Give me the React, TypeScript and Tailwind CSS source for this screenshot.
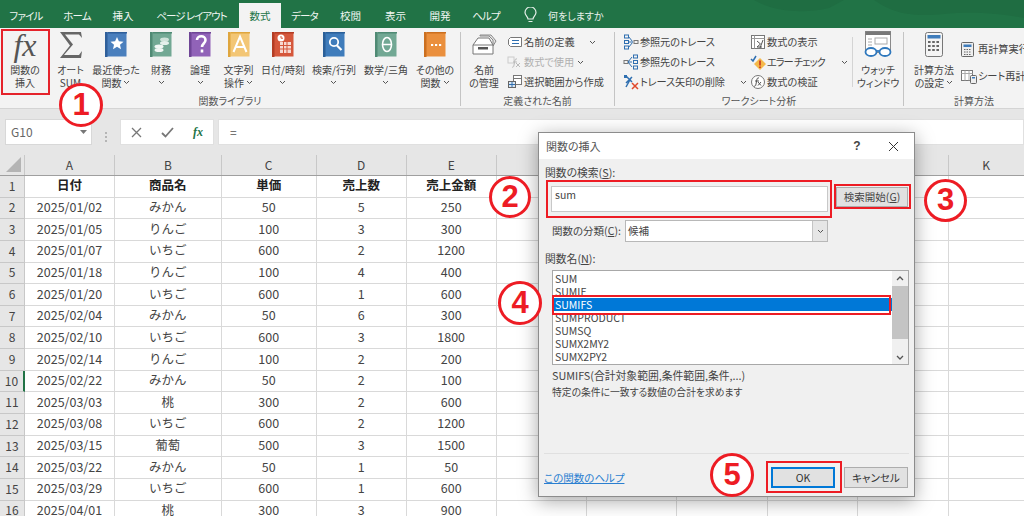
import React from "react";

const Chev = ({ className = "" }: { className?: string }) => (
  <svg width="7" height="5" viewBox="0 0 7 5" className={"inline-block shrink-0 " + className}>
    <path d="M1 1l2.500 2.500L6 1" fill="none" stroke="#555" strokeWidth="1" />
  </svg>
);

const Book = ({ color, dark, children }: { color: string; dark: string; children?: React.ReactNode }) => (
  <svg width="22" height="25" viewBox="0 0 22 25">
    <rect x="0.500" y="0.500" width="21" height="24" fill={color} />
    <rect x="0" y="0" width="2.500" height="25" fill={dark} />
    <rect x="2.500" y="0" width="19.500" height="1.500" fill={dark} />
    {children}
  </svg>
);

const FxBig = () => (
  <span className="font-['Liberation_Serif',serif] italic text-[32px] leading-[32px] text-[#555] [font-feature-settings:normal]">fx</span>
);

const Sigma = () => (
  <svg width="24" height="28" viewBox="0 0 24 28">
    <path d="M1 1h21l1 6-3-3.500H6l8 10-9 10.500h15l3-4-1 7H1l10-12.500z" fill="#666" />
  </svg>
);

const white = "#fff";
const ribbonButtons: { w: string; label: string[]; chev: 0 | 1 | 2; icon: React.ReactNode }[] = [
  { w: "w-[41px]", label: ["オート", "SUM"], chev: 0, icon: <Sigma /> },
  {
    w: "w-[50px]", label: ["最近使った", "関数"], chev: 2,
    icon: <Book color="#4a7fbd" dark="#2f5f9a"><path d="M12 5l1.900 4.300 4.600.4-3.500 3 1 4.500-4-2.400-4 2.400 1-4.500-3.500-3 4.600-.4z" fill={white} /></Book>,
  },
  {
    w: "w-[40px]", label: ["財務"], chev: 1,
    icon: <Book color="#72a894" dark="#4f8a74"><ellipse cx="14.500" cy="7.500" rx="4.500" ry="2" fill="#cfe2da" /><ellipse cx="14.500" cy="11" rx="4.500" ry="2" fill="#e4efeb" /><ellipse cx="9" cy="14.500" rx="4.500" ry="2" fill="#f0f6f4" /><ellipse cx="9" cy="18" rx="4.500" ry="2" fill="#f0f6f4" /></Book>,
  },
  {
    w: "w-[38px]", label: ["論理"], chev: 1,
    icon: <Book color="#9163b8" dark="#6f4596"><path d="M8 8c0-5 8.500-5 8.500 0 0 3.500-3.500 3.500-3.500 7M13 17.500v3" fill="none" stroke={white} strokeWidth="2.600" /></Book>,
  },
  {
    w: "w-[39px]", label: ["文字列", "操作"], chev: 2,
    icon: <Book color="#f3c675" dark="#dfa63e"><path d="M5.500 20L12 4.500 18.500 20M8 15h8" fill="none" stroke={white} strokeWidth="2" /></Book>,
  },
  {
    w: "w-[50px]", label: ["日付/時刻"], chev: 1,
    icon: <Book color="#d5573b" dark="#b33d24"><rect x="8" y="10" width="11" height="11" fill="#f7d9d2" /><path d="M8 13.500h11M8 17h11M11.500 10v11M15 10v11" stroke="#d5573b" strokeWidth="1" /><circle cx="9" cy="6" r="3.500" fill={white} /><path d="M9 4v2.200h2" stroke="#d5573b" fill="none" /></Book>,
  },
  {
    w: "w-[52px]", label: ["検索/行列"], chev: 1,
    icon: <Book color="#3f7cbb" dark="#2a5f98"><circle cx="11" cy="10" r="4.200" fill="none" stroke={white} strokeWidth="1.800" /><path d="M14 13.500l4.500 4.500" stroke={white} strokeWidth="2.200" /></Book>,
  },
  {
    w: "w-[52px]", label: ["数学/三角"], chev: 1,
    icon: <Book color="#72a894" dark="#4f8a74"><ellipse cx="12" cy="12.500" rx="4.500" ry="7" fill="none" stroke={white} strokeWidth="1.600" /><path d="M7.500 12.500h9" stroke={white} strokeWidth="1.500" /></Book>,
  },
  {
    w: "w-[46px]", label: ["その他の", "関数"], chev: 2,
    icon: <Book color="#ea8f3d" dark="#cb6f1f"><path d="M7 13h2.200M11 13h2.200M15 13h2.200" stroke={white} strokeWidth="2.200" /></Book>,
  },
];

const BigBtn = ({ w, label, chev, icon, boxed }: { w: string; label: string[]; chev: 0 | 1 | 2; icon: React.ReactNode; boxed?: boolean }) => (
  <div className={`${w} relative flex flex-col items-center shrink-0`}>
    <div className="h-[33px] flex items-center justify-center">{icon}</div>
    <div className="mt-[2px] text-[10px] leading-[13px] text-[#444] text-center whitespace-nowrap">
      <div>{label[0]}</div>
      <div className="h-[13px] flex items-center justify-center gap-[2px]">
        {label[1] && <span>{label[1]}</span>}
        {chev > 0 && <Chev />}
      </div>
    </div>
    {boxed && <div className="absolute left-[1px] right-0 top-[1px] h-[66px] border-2 border-[#e5232b]" />}
  </div>
);

const GroupLabel = ({ children }: { children: React.ReactNode }) => (
  <div className="h-[15px] text-[10px] leading-[15px] text-[#555] text-center whitespace-nowrap">{children}</div>
);

const Sep = ({ light }: { light?: boolean }) => (
  <div className={light ? "w-px h-[50px] mt-[9px] bg-[#d4d4d4] shrink-0" : "w-px h-[74px] mt-[4px] bg-[#c4c4c4] shrink-0"} />
);

const SmallRow = ({ icon, text, chev, dim, gapRight, textClass }: { icon: React.ReactNode; text: string; chev?: boolean; dim?: boolean; gapRight?: string; textClass?: string }) => (
  <div className={`h-[20px] flex items-center text-[10.200px] whitespace-nowrap ${dim ? "text-[#b0b0b0]" : "text-[#444]"}`}>
    <span className="w-[17px] h-[16px] flex items-center shrink-0">{icon}</span>
    <span className={textClass}>{text}</span>
    {chev && <Chev className={gapRight ?? "ml-[8px]"} />}
  </div>
);

const I = ({ children, w = 16, h = 16 }: { children: React.ReactNode; w?: number; h?: number }) => (
  <svg width={w} height={h} viewBox={`0 0 ${w} ${h}`} fill="none">{children}</svg>
);

const icTag = (
  <I><path d="M1.500 5.500l2-2h11v9h-11l-2-2z" stroke="#777" fill="#fff" /><path d="M5 6.500h7M5 9.500h7" stroke="#2f6fb0" /></I>
);
const icUse = (
  <I><rect x="1" y="3" width="6" height="6" stroke="#ccc" /><path d="M10 5c-1.500-.5-2 .5-2.200 2l-1 5c-.2 1-1 1.500-1.800 1M6 8h4M9 9l4 4M13 9l-4 4" stroke="#bbb" /></I>
);
const icSel = (
  <I><rect x="6.500" y="1.500" width="8" height="9" stroke="#777" fill="#fff" /><path d="M6.500 4.500h8" stroke="#777" /><rect x="1.500" y="7.500" width="7" height="6" stroke="#666" fill="#dbe7f3" /><path d="M5 8v5M2 10.500h6" stroke="#2f6fb0" /></I>
);
const icTrace1 = (
  <I><rect x="1.500" y="1" width="4" height="3" stroke="#2f6fb0" /><rect x="1.500" y="6.500" width="4" height="3" stroke="#2f6fb0" /><rect x="1.500" y="12" width="4" height="3" stroke="#2f6fb0" /><rect x="11" y="6.500" width="4" height="3" stroke="#777" /><path d="M5.500 2.500l4 5M5.500 8h4M5.500 13.500l4-5" stroke="#2f6fb0" /></I>
);
const icTrace2 = (
  <I><rect x="1" y="6.500" width="4" height="3" stroke="#777" /><rect x="10.500" y="1" width="4" height="3" stroke="#2f6fb0" /><rect x="10.500" y="6.500" width="4" height="3" stroke="#2f6fb0" /><rect x="10.500" y="12" width="4" height="3" stroke="#2f6fb0" /><path d="M5 8l4-5M5 8h4M5 8l4 5" stroke="#2f6fb0" /></I>
);
const icRemove = (
  <I><path d="M3 2l6 6M3 13l5-9M9 3L3 9" stroke="#2f6fb0" strokeWidth="1.500" /><rect x="1" y="1" width="3" height="3" fill="#2f6fb0" /><path d="M9 9l6 6M15 9l-6 6" stroke="#e0492c" strokeWidth="1.500" /></I>
);
const icShow = (
  <I><rect x="1.500" y="1.500" width="13" height="13" stroke="#777" fill="#fff" /><path d="M1.500 4.500h13M4.500 1.500v13" stroke="#999" /><path d="M7 7l3.500 3L7 13h5M13 6l-3 8" stroke="#555" /></I>
);
const icErr = (
  <I><path d="M1 5l2 2 3-5" stroke="#2f6fb0" strokeWidth="1.500" /><path d="M10 4l6 6-6 6-6-6z" fill="#f5b94a" /><path d="M10 6.500v5M10 12.500v1.500" stroke="#c8321e" strokeWidth="1.600" /></I>
);
const icEval = (
  <I><circle cx="8" cy="8" r="6.500" stroke="#777" fill="#fff" /><path d="M9 4c-1.500-.5-2 .5-2.200 2l-1 5c-.2 1-1 1.500-1.800 1M5 7h4M8 8l3 3.500M11 8l-3 3.500" stroke="#555" /></I>
);
const icCalcNow = (
  <I w={13} h={15}><rect x="0.500" y="0.500" width="12" height="14" rx="1" fill="#eee" stroke="#666" /><rect x="2.500" y="2.500" width="8" height="2.500" fill="#3f7cbb" /><path d="M3 7.500h7M3 10h7M3 12.500h7" stroke="#666" strokeDasharray="1.500 1" /></I>
);
const icCalcSheet = (
  <I><rect x="0.500" y="2.500" width="11" height="10" stroke="#777" fill="#fff" /><path d="M.5 5.500h11M4 2.500v10M8 2.500v10" stroke="#aaa" /><rect x="9.500" y="7.500" width="6" height="8" rx="1" fill="#eee" stroke="#666" /><rect x="11" y="9" width="3" height="1.500" fill="#3f7cbb" /></I>
);

const NameIcon = () => (
  <svg width="26" height="22" viewBox="0 0 26 22" fill="none">
    <path d="M9 1h11l5 6-3 5V6L18 2H9z" fill="#e4e4e4" stroke="#888" />
    <path d="M2 11l5-7h11l4 7v9H2z" fill="#fff" stroke="#777" />
    <path d="M2 11h20" stroke="#777" />
    <rect x="7" y="13" width="10" height="2.500" fill="#555" />
  </svg>
);
const WatchIcon = () => (
  <svg width="28" height="27" viewBox="0 0 28 27" fill="none">
    <rect x="1.500" y="0.500" width="25" height="21" fill="#fff" stroke="#8a8a8a" />
    <rect x="1.500" y="0.500" width="25" height="3.500" fill="#777" />
    <rect x="11" y="7" width="12" height="6" stroke="#aaa" />
    <path d="M4 8h4M4 11h4M4 14h4" stroke="#aaa" />
    <ellipse cx="7" cy="21" rx="5.500" ry="4" fill="#fff" stroke="#2f78bd" strokeWidth="1.800" />
    <ellipse cx="21" cy="21" rx="5.500" ry="4" fill="#fff" stroke="#2f78bd" strokeWidth="1.800" />
    <path d="M12.500 20h3" stroke="#2f78bd" strokeWidth="1.800" />
  </svg>
);
const CalcIcon = () => (
  <svg width="18" height="25" viewBox="0 0 18 25" fill="none">
    <rect x="0.500" y="0.500" width="17" height="24" rx="2" fill="#f4f4f4" stroke="#777" />
    <rect x="2.500" y="3" width="13" height="3.500" fill="#3f7cbb" />
    <path d="M3 10h12M3 14h12M3 18h12" stroke="#666" strokeWidth="2.200" strokeDasharray="2.600 1.600" />
  </svg>
);

const Ribbon = () => (
  <div className="h-[81px] bg-[#f3f3f3] border-b border-[#d4d4d4] flex overflow-hidden">
    <div className="w-[460px] shrink-0 flex flex-col">
      <div className="h-[66px] flex">
        <BigBtn w="w-[50px]" label={["関数の", "挿入"]} chev={0} icon={<FxBig />} boxed />
        {ribbonButtons.map((b) => <BigBtn key={b.label[0]} {...b} />)}
      </div>
      <GroupLabel>関数ライブラリ</GroupLabel>
    </div>
    <Sep />
    <div className="w-[153px] shrink-0 flex flex-col">
      <div className="h-[66px] flex">
        <BigBtn w="w-[46px]" label={["名前", "の管理"]} chev={0} icon={<NameIcon />} />
        <div className="pt-[4px]">
          <SmallRow icon={icTag} text="名前の定義" chev gapRight="ml-[14px]" />
          <SmallRow icon={icUse} text="数式で使用" chev dim gapRight="ml-[3px]" />
          <SmallRow icon={icSel} text="選択範囲から作成" />
        </div>
      </div>
      <GroupLabel>定義された名前</GroupLabel>
    </div>
    <Sep />
    <div className="w-[288px] shrink-0 flex flex-col">
      <div className="h-[66px] flex pl-[8px]">
        <div className="w-[127px] pt-[4px] shrink-0">
          <SmallRow icon={icTrace1} text="参照元のトレース" textClass="tracking-[-0.150px]" />
          <SmallRow icon={icTrace2} text="参照先のトレース" textClass="tracking-[-0.150px]" />
          <SmallRow icon={icRemove} text="トレース矢印の削除" chev gapRight="ml-[15px]" textClass="tracking-[-0.150px]" />
        </div>
        <div className="w-[102px] pt-[4px] shrink-0">
          <SmallRow icon={icShow} text="数式の表示" />
          <SmallRow icon={icErr} text="エラー チェック" chev gapRight="ml-[16px]" textClass="tracking-[-1px]" />
          <SmallRow icon={icEval} text="数式の検証" />
        </div>
        <Sep light />
        <BigBtn w="w-[50px]" label={["ウォッチ", "ウィンドウ"]} chev={0} icon={<WatchIcon />} />
      </div>
      <GroupLabel>ワークシート分析</GroupLabel>
    </div>
    <Sep />
    <div className="w-[140px] shrink-0 flex flex-col">
      <div className="h-[66px] flex pl-[5px]">
        <BigBtn w="w-[50px]" label={["計算方法", "の設定"]} chev={2} icon={<CalcIcon />} />
        <div className="pl-[2px] pt-[11px] flex flex-col gap-[7px]">
          <SmallRow icon={icCalcNow} text="再計算実行" />
          <SmallRow icon={icCalcSheet} text="シート再計算" />
        </div>
      </div>
      <GroupLabel>計算方法</GroupLabel>
    </div>
  </div>
);

const tabs: [string, string][] = [
  ["ファイル", "w-[52px] tracking-[-0.800px]"], ["ホーム", "w-[50px] tracking-[-0.800px]"], ["挿入", "w-[42px]"],
  ["ページ レイアウト", "w-[95px] tracking-[-1px]"], ["数式", "w-[42px]"], ["データ", "w-[47px] tracking-[-0.800px]"],
  ["校閲", "w-[45px]"], ["表示", "w-[45px]"], ["開発", "w-[44px]"], ["ヘルプ", "w-[48px] tracking-[-0.800px]"],
];

const TabBar = () => (
  <div className="relative h-[28px] bg-[#217346] flex items-end overflow-hidden">
    <svg className="absolute right-0 top-0" width="270" height="28" viewBox="0 0 270 28">
      <path d="M0 0c20 12 50 14 75 8L90 0zM120 0c15 10 30 18 70 14 30-3 60 0 80 4V0z" fill="#1f6d42" />
    </svg>
    {tabs.map(([t, w]) => (
      <div
        key={t}
        className={`${w} h-[25px] flex items-center justify-center text-[10.500px] whitespace-nowrap ${t === "数式" ? "bg-[#f3f3f3] text-[#217346]" : "text-[#f0f6f2]"}`}
      >
        {t}
      </div>
    ))}
    <div className="relative h-[25px] flex items-center pl-[13px] gap-[10px] text-[10px] text-[#e6f0ea]">
      <svg width="15" height="17" viewBox="0 0 15 17" fill="none">
        <path d="M5 12c0-2.500-3-3.500-3-6.500a5.500 5.500 0 0111 0c0 3-3 4-3 6.500zM5.500 14.500h4" stroke="#e6f0ea" strokeWidth="1.200" />
      </svg>
      <span>何をしますか</span>
    </div>
  </div>
);

const FormulaBar = () => (
  <div className="h-[46px] pt-[10px] flex">
    <div className="ml-[5px] w-[87px] h-[26px] bg-white border border-[#d8d8d8] flex items-center justify-between pl-[5px] pr-[4px] text-[12px] text-[#666]">
      <span>G10</span>
      <svg width="7" height="4" viewBox="0 0 7 4"><path d="M0 0h7L3.500 4z" fill="#777" /></svg>
    </div>
    <div className="w-[28px] flex flex-col items-center justify-center gap-[2px]">
      <i className="w-[2px] h-[2px] bg-[#b5b5b5]" /><i className="w-[2px] h-[2px] bg-[#b5b5b5]" /><i className="w-[2px] h-[2px] bg-[#b5b5b5]" />
    </div>
    <div className="w-[94px] h-[26px] bg-white border border-[#e0e0e0] flex items-center justify-between px-[10px]">
      <svg width="11" height="11" viewBox="0 0 11 11"><path d="M1 1l9 9M10 1l-9 9" stroke="#777" strokeWidth="1.300" /></svg>
      <svg width="13" height="11" viewBox="0 0 13 11"><path d="M1 6l3.500 3.500L12 1" fill="none" stroke="#777" strokeWidth="1.800" /></svg>
      <span className="font-['Liberation_Serif',serif] italic font-bold text-[12px] text-[#217346]">fx</span>
    </div>
    <div className="ml-[4px] flex-1 h-[26px] bg-white border border-[#e0e0e0] pl-[11px] flex items-center text-[12px] text-[#555]">=</div>
  </div>
);

const cols = ["A", "B", "C", "D", "E", "F", "G", "H", "I", "J", "K"];
const gridCols = "grid grid-cols-[25px_90px_106.700px_95px_90px_90px_90.400px_90.400px_90.400px_90.400px_90.400px_76px]";
const rows: string[][] = [
  ["日付", "商品名", "単価", "売上数", "売上金額"],
  ["2025/01/02", "みかん", "50", "5", "250"],
  ["2025/01/05", "りんご", "100", "3", "300"],
  ["2025/01/07", "いちご", "600", "2", "1200"],
  ["2025/01/18", "りんご", "100", "4", "400"],
  ["2025/01/20", "いちご", "600", "1", "600"],
  ["2025/02/04", "みかん", "50", "6", "300"],
  ["2025/02/10", "いちご", "600", "3", "1800"],
  ["2025/02/14", "りんご", "100", "2", "200"],
  ["2025/02/22", "みかん", "50", "2", "100"],
  ["2025/03/03", "桃", "300", "2", "600"],
  ["2025/03/08", "いちご", "600", "2", "1200"],
  ["2025/03/15", "葡萄", "500", "3", "1500"],
  ["2025/03/22", "みかん", "50", "1", "50"],
  ["2025/03/29", "いちご", "600", "1", "600"],
  ["2025/04/01", "桃", "300", "3", "900"],
];

const Sheet = () => (
  <div className="flex-1 bg-white overflow-hidden [font-feature-settings:normal]">
    <div className={`${gridCols} h-[21px] bg-[#e6e6e6] border-b border-[#9f9f9f]`}>
      <div className="border-r border-[#c8c8c8] flex items-end justify-end pr-[3px] pb-[3px]">
        <svg width="15" height="15" viewBox="0 0 15 15"><path d="M15 0v15H0z" fill="#b4b4b4" /></svg>
      </div>
      {cols.map((c) => (
        <div key={c} className="border-r border-[#c8c8c8] flex items-center justify-center text-[12px] text-[#444]">{c}</div>
      ))}
    </div>
    {rows.map((r, i) => (
      <div key={i} className={`${gridCols} h-[21.650px]`}>
        <div className={`bg-[#e6e6e6] border-r border-b border-[#c8c8c8] flex items-center justify-center text-[12px] text-[#444] pb-[1px] ${i === 9 ? "border-r-2 border-r-[#217346] bg-[#d2d2d2]" : ""}`}>{i + 1}</div>
        {cols.map((_, j) => (
          <div key={j} className={`border-r border-b border-[#d9d9d9] flex items-center justify-center text-[12.500px] pb-[1px] whitespace-nowrap ${i === 0 ? "font-bold text-[#222]" : "text-[#444]"}`}>
            {r[j] ?? ""}
          </div>
        ))}
      </div>
    ))}
  </div>
);

const Num = ({ n, className }: { n: string; className: string }) => (
  <div className={`absolute rounded-full bg-white border-[3px] border-[#ed1c24] flex items-center justify-center font-['Liberation_Sans',sans-serif] font-bold text-[31px] text-[#ed1c24] ${className}`}>
    {n}
  </div>
);

const U = ({ children }: { children: React.ReactNode }) => <span className="underline">{children}</span>;
const Red = ({ className }: { className: string }) => <div className={`absolute border-[2.500px] border-[#ed1c24] ${className}`} />;
const fnNames = ["SUM", "SUMIF", "SUMIFS", "SUMPRODUCT", "SUMSQ", "SUMX2MY2", "SUMX2PY2"];

const Dialog = () => (
  <div className="absolute left-[538px] top-[132px] w-[377px] h-[365px] bg-[#f0f0f0] border border-[#8c8c8c] shadow-[0_4px_18px_rgba(0,0,0,0.35)] text-[10.500px] text-[#444]">
    <div className="h-[26px] bg-white flex items-center pl-[7px] text-[11px] text-[#555]">
      <span className="flex-1">関数の挿入</span>
      <span className="w-[14px] text-center text-[12px] text-[#444] font-['Liberation_Sans',sans-serif] font-bold">?</span>
      <svg className="ml-[24px] mr-[15px]" width="11" height="11" viewBox="0 0 11 11"><path d="M1 1l9 9M10 1l-9 9" stroke="#333" strokeWidth="1" /></svg>
    </div>
    <div className="pl-[6px] h-[20px] mt-[3px] flex items-center text-[10.800px]">関数の検索(<U>S</U>):</div>
    <div className="flex mt-[4px] ml-[12px]">
      <div className="w-[277px] h-[26px] bg-white border border-[#c8c8c8] pl-[3px] pt-[1px] text-[10.500px] leading-[14px]">sum</div>
      <div className="ml-[8px] w-[72px] h-[20px] mt-[1px] bg-[#e1e1e1] border border-[#adadad] flex items-center justify-center text-[10.500px]">検索開始(<U>G</U>)</div>
    </div>
    <div className="flex items-center mt-[8px] ml-[13px] h-[22px]">
      <span className="w-[73px] text-[10.500px] whitespace-nowrap">関数の分類(<U>C</U>):</span>
      <div className="w-[203px] h-[22px] bg-white border border-[#b8b8b8] flex items-center pl-[2px]">
        <span className="flex-1">候補</span>
        <div className="w-[15px] h-full bg-[#e6e6e6] border-l border-[#c4c4c4] flex items-center justify-center"><Chev /></div>
      </div>
    </div>
    <div className="pl-[6px] h-[16px] mt-[8px] flex items-center text-[10.800px]">関数名(<U>N</U>):</div>
    <div className="mt-[4px] ml-[13px] w-[357px] h-[95px] bg-white border border-[#a8a8a8] flex">
      <div className="flex-1 pt-[1px]">
        {fnNames.map((f) => (
          <div key={f} className={`h-[13px] leading-[13px] pl-[2px] text-[10.500px] ${f === "SUMIFS" ? "bg-[#0078d7] text-white" : ""}`}>{f}</div>
        ))}
      </div>
      <div className="w-[16px] bg-[#f0f0f0] flex flex-col items-center">
        <div className="h-[15px] flex items-center"><svg width="8" height="5" viewBox="0 0 8 5"><path d="M1 4l3-3 3 3" fill="none" stroke="#555" strokeWidth="1.300" /></svg></div>
        <div className="w-full h-[53px] bg-[#c4c4c4]" />
        <div className="flex-1 flex items-end pb-[4px]"><svg width="8" height="5" viewBox="0 0 8 5"><path d="M1 1l3 3 3-3" fill="none" stroke="#555" strokeWidth="1.300" /></svg></div>
      </div>
    </div>
    <div className="ml-[13px] mt-[2px] h-[17px] flex items-center text-[10.800px]">SUMIFS(合計対象範囲,条件範囲,条件,...)</div>
    <div className="ml-[13px] h-[17px] flex items-center text-[9.800px]">特定の条件に一致する数値の合計を求めます</div>
    <div className="ml-[5px] mt-[52px] w-[365px] h-px bg-[#e0e0e0]" />
    <div className="flex items-center ml-[5px] mt-[13px] h-[21px] pr-[6px]">
      <span className="flex-1 text-[#2a7fd0] underline">この関数のヘルプ</span>
      <div className="w-[64px] h-[21px] bg-[#e1e1e1] border-2 border-[#0078d7] flex items-center justify-center text-[#333]">OK</div>
      <div className="ml-[9px] w-[64px] h-[21px] bg-[#e1e1e1] border border-[#adadad] flex items-center justify-center text-[#333]">キャンセル</div>
    </div>
    <Red className="left-[7px] top-[47px] w-[286px] h-[38px]" />
    <Red className="left-[295px] top-[51px] w-[77px] h-[25px]" />
    <Red className="left-[13px] top-[162px] w-[339px] h-[20px]" />
    <Red className="left-[227px] top-[328px] w-[76px] h-[32px]" />
  </div>
);

export default function App() {
  return (
    <div className="relative w-[1024px] h-[516px] overflow-hidden bg-[#e6e6e6] flex flex-col font-['Noto_Sans_CJK_JP','Liberation_Sans',sans-serif] [font-feature-settings:'palt']">
      <TabBar />
      <Ribbon />
      <FormulaBar />
      <Sheet />
      <Dialog />
      <Num n="1" className="left-[59px] top-[83px] w-[44px] h-[44px]" />
      <Num n="2" className="left-[489px] top-[176px] w-[42px] h-[42px]" />
      <Num n="3" className="left-[924px] top-[179px] w-[43px] h-[43px]" />
      <Num n="4" className="left-[498px] top-[281px] w-[44px] h-[44px]" />
      <Num n="5" className="left-[710px] top-[453px] w-[44px] h-[44px]" />
    </div>
  );
}
